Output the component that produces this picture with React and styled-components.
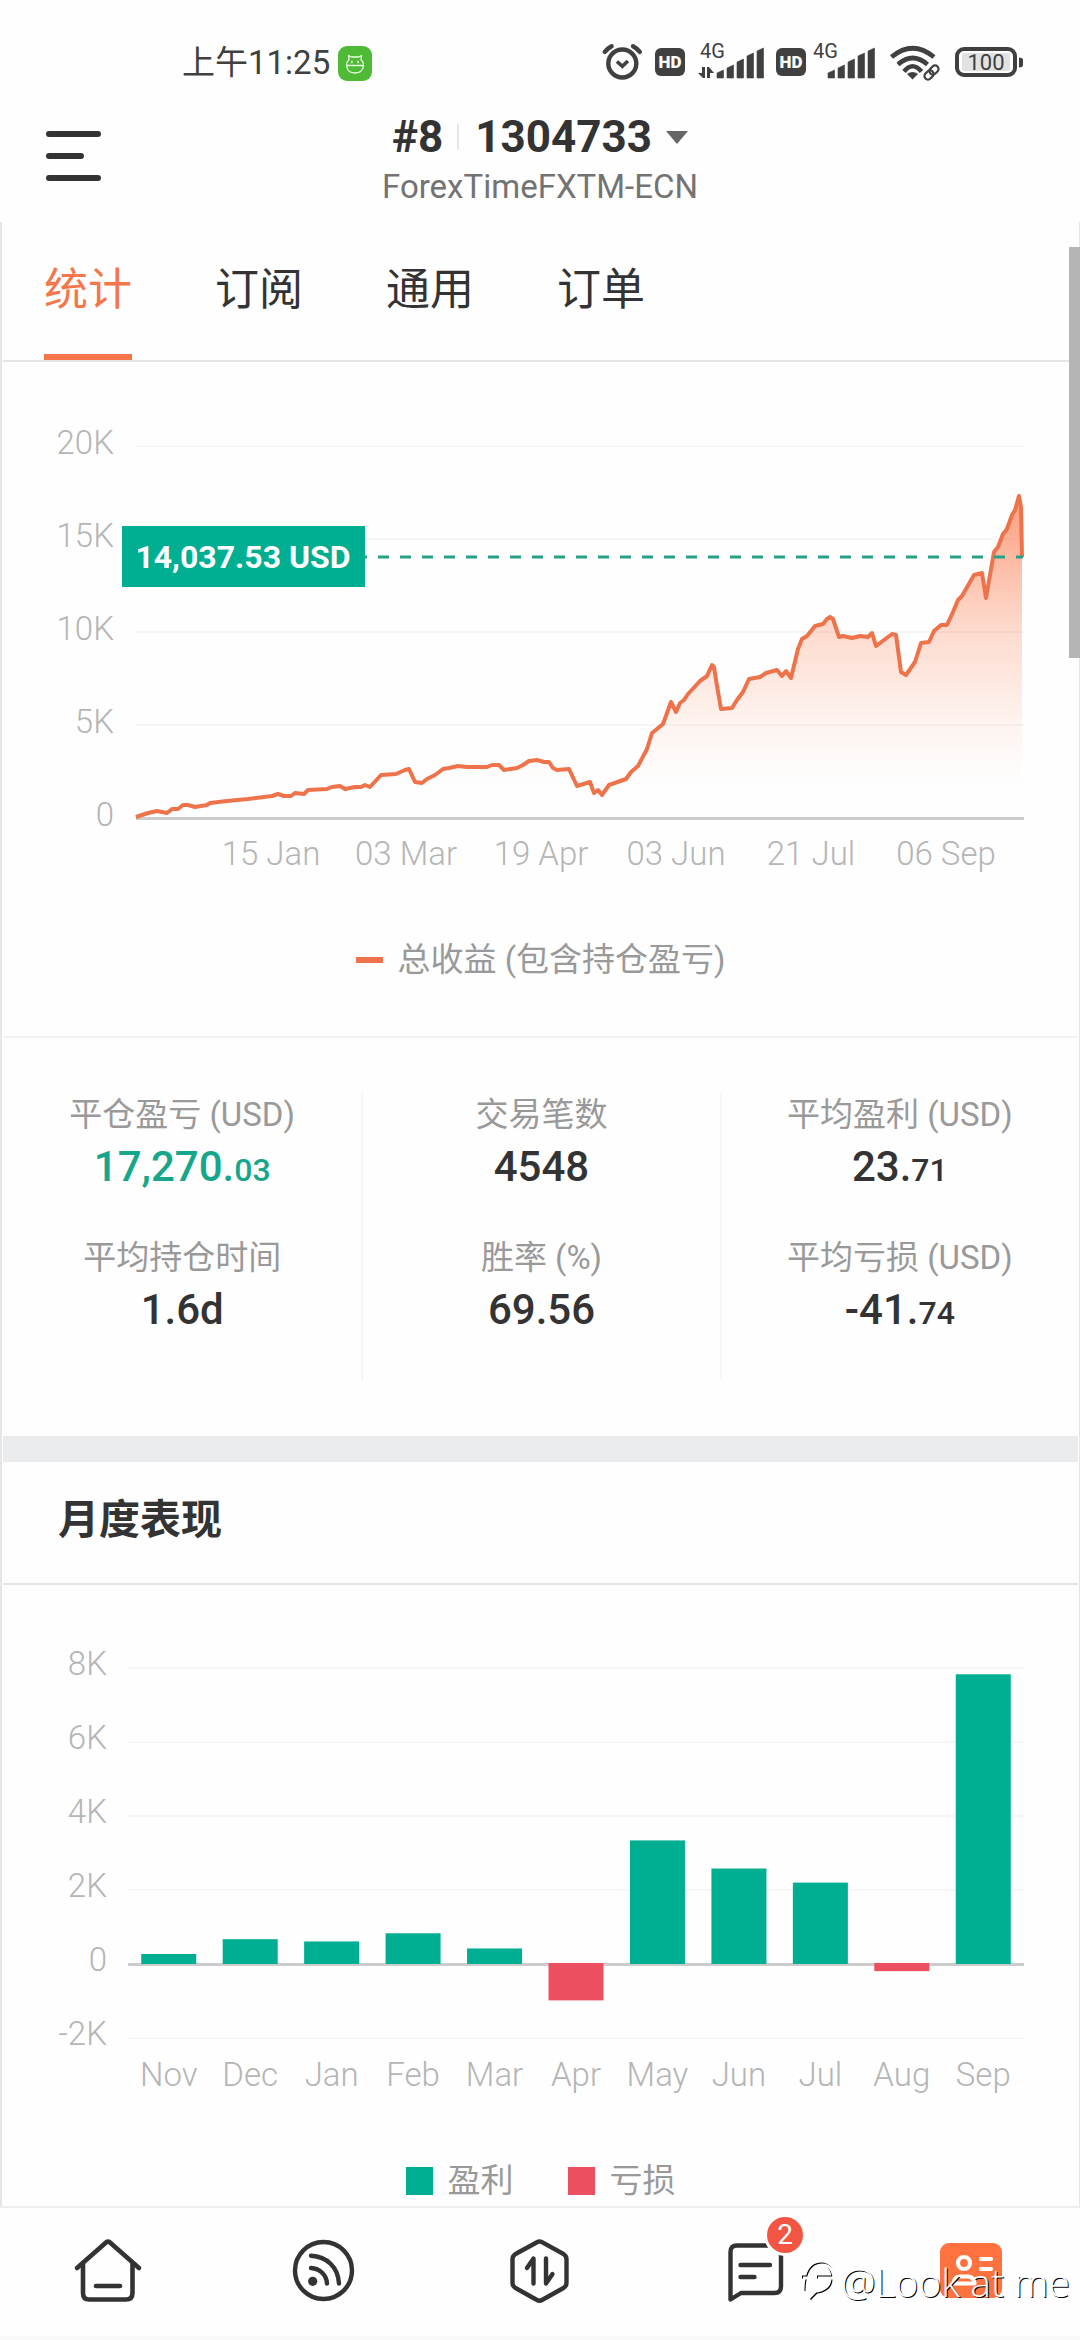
import { useState } from "react";
import styled, { createGlobalStyle } from "styled-components";

const GlobalStyle = createGlobalStyle`
  * { box-sizing: border-box; }

  body {
    margin: 0;
    background: #fefefe;
    color: #333;
    font-family: Roboto, "Noto Sans CJK SC", sans-serif;
  }

  button {
    margin: 0;
    padding: 0;
    border: 0;
    background: none;
    color: inherit;
    font: inherit;
    cursor: pointer;
  }

  svg { display: block; flex: none; overflow: visible; }
`;

// Phone status bar
const StatusBar = styled.div`
  display: flex;
  align-items: center;
  justify-content: space-between;
  height: 88px;
  padding: 38px 57px 0 182px;
  color: #404040;
`;

const StatusGroup = styled.div`
  display: flex;
  align-items: center;
  gap: ${(props) => props.$gap}px;
`;

const Clock = styled.span`
  font-size: 33px;
  line-height: 50px;
`;

// Account header
const Header = styled.header`
  display: grid;
  grid-template-columns: 1fr auto 1fr;
  align-items: center;
  padding: 21px 46px 13px;
`;

const MenuButton = styled.button`
  display: flex;
  flex-direction: column;
  justify-self: start;
  gap: 16px;
  padding-bottom: 6px;
`;

const MenuLine = styled.span`
  width: ${(props) => (props.$short ? 38 : 55)}px;
  height: 6px;
  border-radius: 3px;
  background: #333;
`;

const Account = styled.div`
  display: flex;
  flex-direction: column;
  align-items: center;
`;

const AccountButton = styled.button`
  display: flex;
  align-items: center;
  font-size: 44px;
  font-weight: 700;
  line-height: 56px;
`;

const Separator = styled.span`
  width: 2px;
  height: 26px;
  margin: 0 16px 0 14px;
  background: #e6e6e6;
`;

const Caret = styled.span`
  margin-left: 14px;
  border: 11px solid transparent;
  border-top: 13px solid #666;
  border-bottom: 0;
`;

const Server = styled.div`
  color: #737373;
  font-size: 33px;
  line-height: 44px;
`;

// Bordered page under the header
const Frame = styled.main`
  padding: 0 1px;
  border: solid #e6e6e6;
  border-width: 0 1px 0 2px;
`;

const Tabs = styled.nav`
  display: flex;
  gap: 83px;
  padding: 36px 41px 0;
  border-bottom: 2px solid #e5e5e5;
`;

const Tab = styled.button`
  padding-bottom: 32px;
  border-bottom: 6px solid ${(props) => (props.$active ? "#f5764a" : "transparent")};
  color: ${(props) => (props.$active ? "#f5764a" : "#333")};
  font-size: 44px;
  line-height: 64px;
`;

const GrowthSection = styled.section`
  padding-bottom: 54px;
  border-bottom: 2px solid #f2f2f2;
`;

const ChartSvg = styled.svg`
  width: 100%;
  height: auto;

  text {
    fill: #b5b5b5;
    font-size: 33px;
    font-weight: 300;
  }

  .tag {
    fill: #fff;
    font-size: 32px;
    font-weight: 700;
  }
`;

const Legend = styled.div`
  display: flex;
  justify-content: center;
  gap: 54px;
  padding-top: ${(props) => props.$top}px;
`;

const LegendItem = styled.span`
  display: flex;
  align-items: center;
  gap: 15px;
  color: #999;
  font-size: 33px;
  line-height: 44px;

  &::before {
    content: "";
    width: 27px;
    height: ${(props) => (props.$line ? 6 : 28)}px;
    background: ${(props) => props.$color};
  }
`;

const Stats = styled.section`
  display: grid;
  grid-template-columns: repeat(3, 1fr);
  padding: 55px 0 56px;
`;

const StatColumn = styled.div`
  display: flex;
  flex-direction: column;
  gap: 39px;
  padding-bottom: 40px;
  text-align: center;

  & + & {
    border-left: 2px solid #f6f6f6;
  }
`;

const StatLabel = styled.div`
  color: #999;
  font-size: 33px;
  line-height: 44px;
`;

const StatValue = styled.div`
  color: ${(props) => (props.$profit ? "#15a68b" : "#333")};
  font-size: 42px;
  font-weight: 500;
  line-height: 60px;

  small {
    font-size: 32px;
    line-height: 32px;
  }
`;

const Band = styled.div`
  height: 26px;
  background: #eaebed;
`;

const SectionTitle = styled.h2`
  margin: 0;
  padding: 26px 55px 31px;
  border-bottom: 2px solid #e3e3e3;
  font-size: 41px;
  font-weight: 700;
  line-height: 64px;
`;

const MonthSection = styled.section`
  padding-bottom: 3px;
`;

// Bottom navigation
const BottomBar = styled.nav`
  position: relative;
  display: grid;
  grid-template-columns: repeat(5, 1fr);
  height: 134px;
  border-top: 2px solid #eee;
  border-bottom: 4px solid #f9f9f9;
`;

const NavButton = styled.button`
  display: flex;
  align-items: center;
  justify-content: center;
`;

const NavIcon = styled.span`
  position: relative;
  color: #333;
`;

const Badge = styled.span`
  position: absolute;
  top: -22px;
  left: 44px;
  width: 42px;
  height: 42px;
  border: 3px solid #fefefe;
  border-radius: 50%;
  background: #f25643;
  color: #fff;
  font-size: 28px;
  line-height: 36px;
  text-align: center;
`;

const Watermark = styled.div`
  position: absolute;
  right: 10px;
  bottom: 28px;
  display: flex;
  align-items: center;
  gap: 5px;
  color: #fff;
  font-family: "Open Sans", "Noto Sans", sans-serif;
  font-size: 39px;
  font-weight: 300;
  line-height: 52px;
  text-shadow: 1px 1px 0 #000;
  pointer-events: none;

  svg {
    filter: drop-shadow(-1px -1px 0 #000);
  }
`;

// Scroll position marker on the right edge, drawn over the frame
const ScrollThumb = styled.div`
  position: absolute;
  top: 247px;
  right: 0;
  width: 11px;
  height: 411px;
  background: #b5b5b5;
`;

const tabs = ["统计", "订阅", "通用", "订单"];

const curve = [
  [136, 817], [148, 813], [157, 811], [167, 813], [172, 809], [178, 809], [183, 805], [188, 805],
  [195, 807], [201, 806], [207, 805], [210, 803], [227, 801], [248, 799], [272, 796], [278, 794],
  [284, 796], [291, 796], [295, 793], [304, 794], [308, 790], [327, 789], [332, 787], [340, 786],
  [345, 789], [355, 787], [361, 787], [365, 785], [370, 787], [381, 775], [396, 774], [405, 770],
  [409, 769], [415, 782], [422, 783], [427, 779], [435, 775], [443, 769], [449, 768], [458, 766],
  [467, 767], [487, 767], [492, 765], [499, 765], [504, 770], [517, 768], [523, 765], [529, 761],
  [537, 760], [544, 762], [549, 762], [553, 768], [557, 770], [569, 769], [577, 786], [590, 782],
  [594, 793], [598, 790], [602, 795], [609, 785], [626, 779], [631, 772], [638, 766], [647, 749],
  [652, 733], [663, 724], [671, 702], [676, 712], [680, 703], [684, 700], [688, 694], [700, 681],
  [707, 676], [712, 665], [714, 667], [716, 680], [721, 709], [732, 708], [737, 700], [743, 692],
  [749, 679], [760, 677], [766, 673], [777, 670], [782, 676], [786, 671], [791, 678], [798, 649],
  [802, 639], [807, 636], [815, 626], [823, 624], [827, 619], [830, 617], [833, 619], [839, 637],
  [843, 636], [852, 638], [860, 636], [868, 637], [872, 633], [876, 646], [892, 634], [896, 635],
  [901, 672], [906, 675], [915, 662], [921, 643], [929, 642], [934, 631], [941, 625], [947, 625],
  [953, 612], [958, 600], [962, 596], [974, 575], [982, 573], [986, 598], [994, 552], [998, 547],
  [1003, 534], [1007, 529], [1012, 515], [1015, 510], [1019, 496], [1021, 507], [1022, 557],
];

const growthTicks = ["20K", "15K", "10K", "5K", "0"];
const growthDates = ["15 Jan", "03 Mar", "19 Apr", "03 Jun", "21 Jul", "06 Sep"];

const statColumns = [
  [
    { label: "平仓盈亏 (USD)", value: "17,270.", decimals: "03", profit: true },
    { label: "平均持仓时间", value: "1.6d" },
  ],
  [
    { label: "交易笔数", value: "4548" },
    { label: "胜率 (%)", value: "69.56" },
  ],
  [
    { label: "平均盈利 (USD)", value: "23.", decimals: "71" },
    { label: "平均亏损 (USD)", value: "-41.", decimals: "74" },
  ],
];

const monthTicks = ["8K", "6K", "4K", "2K", "0", "-2K"];
const months = [
  { name: "Nov", value: 270 },
  { name: "Dec", value: 670 },
  { name: "Jan", value: 610 },
  { name: "Feb", value: 830 },
  { name: "Mar", value: 420 },
  { name: "Apr", value: -1010 },
  { name: "May", value: 3340 },
  { name: "Jun", value: 2580 },
  { name: "Jul", value: 2200 },
  { name: "Aug", value: -220 },
  { name: "Sep", value: 7830 },
];

function AlarmIcon() {
  return (
    <svg width="47" height="40" viewBox="0 0 47 40" fill="none" stroke="currentColor" strokeWidth="4.4" strokeLinecap="round">
      <circle cx="20.3" cy="20.5" r="14" />
      <path d="M15 18.5l5.3 4.8 5.6-5.3" strokeWidth="3.6" strokeLinecap="butt" />
      <path d="M2.8 8.8Q6 5 9.6 3.2M37.8 8.8Q34.6 5 31 3.2" />
    </svg>
  );
}

function HdIcon() {
  return (
    <svg width="31" height="40" viewBox="0 0 31 40">
      <rect x="0" y="5" width="30" height="28" rx="6" fill="currentColor" />
      <text x="15" y="25" fill="#fff" fontSize="17" fontWeight="900" textAnchor="middle">HD</text>
    </svg>
  );
}

function SignalIcon({ data }) {
  return (
    <svg width={data ? 78 : 71} height="40" viewBox={data ? "0 0 78 40" : "10 0 71 40"} fill="currentColor">
      <text x={data ? 8 : 10} y="15" fontSize="20">4G</text>
      {data && <path d="M10 24h3v11h-2l-5-5h4zM15 35h3v-5h4l-5-6h-2z" />}
      {[27, 22, 16, 10, 5].map((top, i) => {
        const x = 25 + i * 10;
        return <path key={top} d={`M${x} ${top + 3}L${x + 6.5} ${top}V35H${x}z`} stroke="currentColor" strokeWidth="0.6" strokeLinejoin="round" />;
      })}
    </svg>
  );
}

function WifiIcon() {
  return (
    <svg width="59" height="40" viewBox="0 0 59 40" fill="none" stroke="currentColor" strokeWidth="4.6">
      <path d="M1.5 14Q22.5 -3.5 44 14M8 21.500Q22.5 8.5 37.5 21.5M14 28.500Q22.5 18 31.5 28.5" />
      <path d="M17 31Q22.5 27 28 31L22.5 36.500z" fill="currentColor" stroke="none" />
      <g strokeWidth="2.2" transform="rotate(-45 41.5 29.5)">
        <rect x="33" y="26" width="10" height="7" rx="3.5" />
        <rect x="40" y="26" width="10" height="7" rx="3.5" />
      </g>
    </svg>
  );
}

function BatteryIcon() {
  return (
    <svg width="68" height="40" viewBox="0 0 68 40">
      <rect x="2" y="6" width="58" height="26" rx="7" fill="none" stroke="currentColor" strokeWidth="4" />
      <rect x="7" y="10" width="48" height="18" rx="2" fill="#e2e2e2" />
      <text x="31" y="27" fill="currentColor" fontSize="22" textAnchor="middle">100</text>
      <path d="M64 14.5q4 0 4 2.5v5q0 2.5-4 2.500z" fill="currentColor" />
    </svg>
  );
}

function AppIcon() {
  return (
    <svg width="34" height="35" viewBox="0 0 34 35">
      <rect width="34" height="35" rx="9" fill="#4fba35" />
      <g fill="none" stroke="#e9ffe2" strokeWidth="1.3" strokeLinejoin="round">
        <path d="M11 13.5L10.5 9.5l3 1.5h7l3-1.5-.5 4Q25.5 16 25.5 19.5H8.5Q8.5 16 11 13.5zM8.5 19.5Q9.5 27 17 27t8.5-7.5" />
        <path d="M13 16h1.6M19.4 16H21M13.8 14.8v2.4M20.2 14.8v2.4" />
      </g>
    </svg>
  );
}

function HomeIcon() {
  return (
    <svg width="72" height="72" viewBox="0 0 72 72" fill="none" stroke="currentColor" strokeWidth="4.6" strokeLinecap="round" strokeLinejoin="round">
      <path d="M5 32L34.3 6.2Q36 5 37.7 6.2L67 32" />
      <path d="M11 28V57Q11 63.5 17 63.5H54Q60.5 63.5 60.5 57V28M24 50H48" />
    </svg>
  );
}

function FeedIcon() {
  return (
    <svg width="72" height="72" viewBox="0 0 72 72" fill="none" stroke="currentColor" strokeWidth="4.4" strokeLinecap="round">
      <circle cx="35.5" cy="34.5" r="28.5" />
      <path d="M23 19.7C39 20.5 50 31 51 47.5M23 32C32 32.5 38.5 39 39 47.5" />
      <circle cx="24.7" cy="45.3" r="4.6" fill="currentColor" stroke="none" />
    </svg>
  );
}

function TradeIcon() {
  return (
    <svg width="72" height="72" viewBox="0 0 72 72" fill="none" stroke="currentColor" strokeWidth="4.4" strokeLinecap="round" strokeLinejoin="round">
      <path d="M33 6.2Q35.5 4.8 38 6.2L59.5 18Q62.5 20 62.5 23V47Q62.5 50 59.5 52L38 64Q35.5 65.4 33 64L11.5 52Q8.5 50 8.5 47V23Q8.5 20 11.5 18z" />
      <path d="M23 32L29.5 22.5V47.5M48.5 38L42 47.5V22.5" />
    </svg>
  );
}

function ChatIcon() {
  return (
    <svg width="72" height="72" viewBox="0 0 72 72" fill="none" stroke="currentColor" strokeWidth="4.4" strokeLinecap="round" strokeLinejoin="round">
      <path d="M10.5 63.5V16Q10.5 9.5 17 9.5H54.5Q61 9.5 61 16V50.5Q61 57 54.5 57H21z" />
      <path d="M20.5 29H50M20.5 41H34.5" />
    </svg>
  );
}

function ProfileIcon() {
  return (
    <svg width="72" height="72" viewBox="0 0 72 72" fill="none" stroke="#fff" strokeWidth="4.2" strokeLinecap="round" strokeLinejoin="round">
      <rect x="4" y="7" width="62" height="55" rx="9" fill="#fe7240" stroke="none" />
      <circle cx="28" cy="27" r="6" />
      <path d="M17.5 47.5Q18 41 24 40.5H32Q38 41 38.5 47.500zM45 23H55M45 33H55" />
    </svg>
  );
}

function GrowthChart() {
  const line = "M" + curve.map((point) => point.join(" ")).join("L");

  return (
    <ChartSvg viewBox="3 362 1075 530" role="img" aria-label="总收益">
      <defs>
        <linearGradient id="growth-fill" x1="0" y1="0" x2="0" y2="1">
          <stop offset="0" stopColor="#fb7343" stopOpacity="0.7" />
          <stop offset="0.4" stopColor="#fb7343" stopOpacity="0.27" />
          <stop offset="0.7" stopColor="#fb7343" stopOpacity="0.08" />
          <stop offset="0.9" stopColor="#fb7343" stopOpacity="0" />
        </linearGradient>
      </defs>
      {growthTicks.map((tick, i) => (
        <g key={tick}>
          <text x="114" y={454 + i * 93} textAnchor="end">{tick}</text>
          <rect x="136" y={445 + i * 93} width="888" height={tick === "0" ? 3 : 2} fill={tick === "0" ? "#ccc" : "#f6f6f6"} />
        </g>
      ))}
      <path d={`${line}V817H136z`} fill="url(#growth-fill)" />
      <path d={line} fill="none" stroke="#ee734a" strokeWidth="4" strokeLinejoin="round" />
      <path d="M136 557H1023" stroke="#2a9f88" strokeWidth="3" strokeDasharray="11 11" />
      <rect x="122" y="526" width="243" height="61" fill="#00ae91" />
      <text className="tag" x="243" y="568" textAnchor="middle">14,037.53 USD</text>
      {growthDates.map((date, i) => (
        <text key={date} x={271 + i * 135} y="865" textAnchor="middle">{date}</text>
      ))}
    </ChartSvg>
  );
}

function MonthChart() {
  const zero = 379;
  const step = 74;

  return (
    <ChartSvg viewBox="0 0 1075 525" role="img" aria-label="月度表现">
      {monthTicks.map((tick, i) => (
        <g key={tick}>
          <text x="104" y={90 + i * step} textAnchor="end">{tick}</text>
          <rect x="125" y={82 + i * step} width="896" height={tick === "0" ? 3 : 2} fill={tick === "0" ? "#ccc" : "#f6f6f6"} />
        </g>
      ))}
      {months.map(({ name, value }, i) => {
        const height = (Math.abs(value) / 2000) * step;
        const x = 125 + ((i + 0.5) * 896) / months.length;
        return (
          <g key={name}>
            <rect
              x={x - 27.5}
              y={value > 0 ? zero - height : zero - 1}
              width="55"
              height={height}
              fill={value > 0 ? "#00ae91" : "#eb4f60"}
            />
            <text x={x} y="501" textAnchor="middle">{name}</text>
          </g>
        );
      })}
    </ChartSvg>
  );
}

function App() {
  const [activeTab, setActiveTab] = useState("统计");

  return (
    <>
      <GlobalStyle />
      <StatusBar>
        <StatusGroup $gap={8}>
          <Clock>上午11:25</Clock>
          <AppIcon />
        </StatusGroup>
        <StatusGroup $gap={6}>
          <AlarmIcon />
          <HdIcon />
          <SignalIcon data />
          <HdIcon />
          <SignalIcon />
          <WifiIcon />
          <BatteryIcon />
        </StatusGroup>
      </StatusBar>

      <Header>
        <MenuButton aria-label="菜单">
          <MenuLine />
          <MenuLine $short />
          <MenuLine />
        </MenuButton>
        <Account>
          <AccountButton>
            #8
            <Separator />
            1304733
            <Caret />
          </AccountButton>
          <Server>ForexTimeFXTM-ECN</Server>
        </Account>
      </Header>

      <Frame>
        <Tabs>
          {tabs.map((tab) => (
            <Tab key={tab} $active={tab === activeTab} onClick={() => setActiveTab(tab)}>{tab}</Tab>
          ))}
        </Tabs>

        <GrowthSection>
          <GrowthChart />
          <Legend $top={46}>
            <LegendItem $line $color="#ee734a">总收益 (包含持仓盈亏)</LegendItem>
          </Legend>
        </GrowthSection>

        <Stats>
          {statColumns.map((column) => (
            <StatColumn key={column[0].label}>
              {column.map((stat) => (
                <div key={stat.label}>
                  <StatLabel>{stat.label}</StatLabel>
                  <StatValue $profit={stat.profit}>
                    {stat.value}
                    {stat.decimals && <small>{stat.decimals}</small>}
                  </StatValue>
                </div>
              ))}
            </StatColumn>
          ))}
        </Stats>

        <Band />

        <MonthSection>
          <SectionTitle>月度表现</SectionTitle>
          <MonthChart />
          <Legend $top={49}>
            <LegendItem $color="#00ae91">盈利</LegendItem>
            <LegendItem $color="#eb4f60">亏损</LegendItem>
          </Legend>
        </MonthSection>
      </Frame>

      <BottomBar>
        <NavButton aria-label="首页"><NavIcon><HomeIcon /></NavIcon></NavButton>
        <NavButton aria-label="动态"><NavIcon><FeedIcon /></NavIcon></NavButton>
        <NavButton aria-label="交易"><NavIcon><TradeIcon /></NavIcon></NavButton>
        <NavButton aria-label="消息">
          <NavIcon>
            <ChatIcon />
            <Badge>2</Badge>
          </NavIcon>
        </NavButton>
        <NavButton aria-label="我的"><NavIcon><ProfileIcon /></NavIcon></NavButton>
        <Watermark>
          <svg width="34" height="40" viewBox="0 0 34 40" fill="none" stroke="#fff" strokeWidth="3">
            <path d="M1 16H7M5 30C5 12 10 3 20 3S32 12 32 17C32 27 24 32 16 33L10 39M16 16H32" />
          </svg>
          @Look at me
        </Watermark>
      </BottomBar>
      <ScrollThumb />
    </>
  );
}

export default App;
